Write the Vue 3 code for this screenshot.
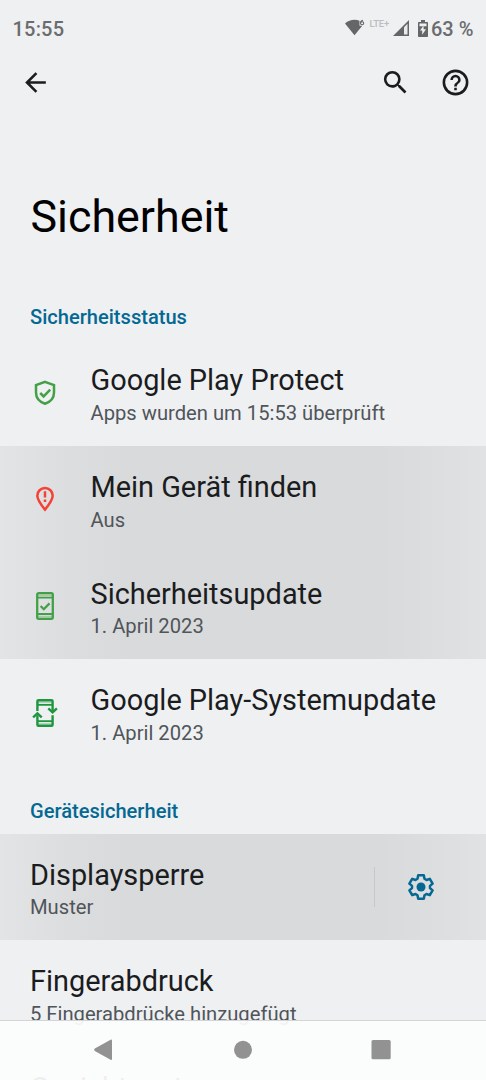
<script setup>
const status = [
  { icon: 'shield', title: 'Google Play Protect', sub: 'Apps wurden um 15:53 überprüft' },
  { icon: 'pin', title: 'Mein Gerät finden', sub: 'Aus', pressed: true },
  { icon: 'phone', title: 'Sicherheitsupdate', sub: '1. April 2023', pressed: true },
  { icon: 'sync', title: 'Google Play-Systemupdate', sub: '1. April 2023' },
]
</script>

<template>
  <div class="screen">
    <header class="statusbar">
      <span class="clock">15:55</span>
      <svg class="wifi" viewBox="0 0 22 18">
        <path d="M0 4.600C2.800 2 6 .8 9.500.8c1.800 0 3.400.3 5 .9v5h2.800L9.500 16.200Z" fill="#656668" />
        <path d="M18 1.200c-1.700.3-2.500 1.400-2.500 2.700 0 1.100.6 1.800 1.600 1.800s1.600-.6 1.600-1.500-.6-1.500-1.500-1.500-1.500.6-1.600 1.300" fill="none" stroke="#656668" stroke-width="1.100" />
      </svg>
      <span class="lte">LTE+</span>
      <svg class="signal" viewBox="0 0 16 16">
        <path d="M0 16 16 0v16Z" fill="#656668" />
        <path d="M11 7.200 14.500 3.700v10.800H11Z" fill="#e9eaec" />
      </svg>
      <svg class="battery" viewBox="0 0 10 17">
        <path d="M3 0h4v2h2.200q.8 0 .8.8v13.400q0 .8-.8.8H.8q-.8 0-.8-.8V2.800Q0 2 .8 2H3Z" fill="#656668" />
        <path d="M1.500 3.500h7v2.700h-7ZM5.600 5.400 2 10.400h2.200v4.400l3.800-5.500H5.600Z" fill="#eff0f2" />
      </svg>
      <span class="percent">63 %</span>
    </header>

    <nav class="toolbar">
      <svg class="tool" viewBox="0 0 24 24"><path d="M20 11H7.830l5.590-5.590L12 4l-8 8 8 8 1.410-1.410L7.830 13H20Z" /></svg>
      <span class="grow"></span>
      <svg class="tool search" viewBox="0 0 24 24"><path d="M15.500 14h-.79l-.28-.27A6.470 6.470 0 0 0 16 9.500 6.500 6.500 0 1 0 9.500 16c1.610 0 3.090-.59 4.230-1.570l.27.28v.79l5 4.990L20.490 19l-4.990-5Zm-6 0a4.500 4.500 0 1 1 0-9 4.500 4.500 0 0 1 0 9Z" /></svg>
      <svg class="tool help" viewBox="0 0 24 24"><path d="M11 18h2v-2h-2v2Zm1-16a10 10 0 1 0 0 20 10 10 0 0 0 0-20Zm0 18a8 8 0 1 1 0-16 8 8 0 0 1 0 16Zm0-14a4 4 0 0 0-4 4h2a2 2 0 1 1 4 0c0 2-3 1.750-3 5h2c0-2.250 3-2.500 3-5a4 4 0 0 0-4-4Z" /></svg>
    </nav>

    <h1>Sicherheit</h1>
    <h2 class="first">Sicherheitsstatus</h2>

    <div v-for="r in status" :key="r.title" class="row" :class="{ pressed: r.pressed }">
      <div class="lead">
        <svg v-if="r.icon === 'shield'" viewBox="0 0 30 30" fill="none" stroke="#43a047" stroke-width="2.500">
          <path d="M15 3.900 24 7.200v7.300c0 5.400-3.600 9.400-9 11.200-5.400-1.800-9-5.800-9-11.200V7.200Z" />
          <path d="m10.200 15 3.400 3.400 6.600-6.700" />
        </svg>
        <svg v-else-if="r.icon === 'pin'" viewBox="0 0 30 30" fill="none" stroke="#f44336" stroke-width="2.500">
          <path d="M15 25.600C10.500 20 7.300 16 7.300 11.700a7.700 7.700 0 0 1 15.400 0C22.700 16 19.500 20 15 25.600Z" />
          <path d="M15 7.200v6.300M15 15.600v2.500" />
        </svg>
        <svg v-else-if="r.icon === 'phone'" viewBox="0 0 30 30" fill="none" stroke="#43a047" stroke-width="2.300">
          <rect x="7.200" y="2.200" width="15.600" height="25.600" rx="1.500" />
          <path d="M7 6.600h16M7 23h16" stroke-width="1.800" />
          <path d="M7 4.300h16M7 25.700h16" stroke-opacity=".35" stroke-width="1.800" />
          <path d="m10.600 15 3.200 3.200 5.700-5.800" />
        </svg>
        <svg v-else viewBox="0 0 30 30" fill="none" stroke="#1e9640" stroke-width="2.400">
          <path d="M7.400 13V3.200q0-1 1-1h13.200q1 0 1 1V13M22.600 17.200v9.600q0 1-1 1H8.400q-1 0-1-1v-9.600" />
          <path d="M7.400 6.800h15.200M7.400 23.200h15.200" stroke-width="1.800" />
          <path d="M7.400 4.300h15.200M7.400 25.700h15.200" stroke-opacity=".3" stroke-width="1.800" />
          <path d="m18.300 10.300 4.300 4 4.300-4M3.100 19.300l4.300-4 4.300 4" />
        </svg>
      </div>
      <div class="text">
        <div class="title">{{ r.title }}</div>
        <div class="sub">{{ r.sub }}</div>
      </div>
    </div>

    <h2 class="second">Gerätesicherheit</h2>

    <div class="row pressed lock">
      <div class="text plain">
        <div class="title">Displaysperre</div>
        <div class="sub">Muster</div>
      </div>
      <div class="gearbox">
        <svg viewBox="0 0 26 26">
          <path d="M10.200 1.300h5.600l.7 3.500 2 1.200 3.300-1.200 2.800 4.800-2.600 2.300v2.200l2.600 2.300-2.800 4.800-3.300-1.200-2 1.200-.7 3.500h-5.600l-.7-3.500-2-1.200-3.300 1.200-2.800-4.800L4 14.100v-2.200L1.400 9.600l2.800-4.800L7.500 6l2-1.200Z" fill="none" stroke="#046893" stroke-width="2.500" stroke-linejoin="round" />
          <circle cx="13" cy="13" r="4.500" fill="#046893" />
        </svg>
      </div>
    </div>

    <div class="row">
      <div class="text plain">
        <div class="title">Fingerabdruck</div>
        <div class="sub">5 Fingerabdrücke hinzugefügt</div>
      </div>
    </div>
    <div class="row">
      <div class="text plain">
        <div class="title">Gesichtsentsperrung</div>
      </div>
    </div>

    <footer class="navbar">
      <svg viewBox="0 1 486 59" fill="#929292">
        <path d="M94.800 28.600 110.600 19.700q1.400-.7 1.400.8v18.400q0 1.500-1.400.8L94.800 30.900q-1.600-1.100 0-2.300Z" />
        <circle cx="243" cy="29.800" r="9" />
        <rect x="371.500" y="20.100" width="19.200" height="19.200" rx="1.500" />
      </svg>
    </footer>
  </div>
</template>

<style>
body { margin: 0; background: #eff0f2; }
</style>

<style scoped>
.screen {
  position: relative;
  width: 486px;
  height: 1080px;
  overflow: hidden;
  background: #eff0f2;
  font-family: Roboto, "Liberation Sans", sans-serif;
  color: #1b1c1e;
}
.screen svg { display: block; flex: none; }
.statusbar {
  display: flex;
  height: 56px;
  box-sizing: border-box;
  padding: 0 12.500px;
  align-items: center;
  font-size: 20px;
  font-weight: 500;
  color: #6b6c6e;
}
.clock { flex: 1; line-height: 24px; padding-top: 2px; letter-spacing: 0.200px; }
.wifi { width: 22px; height: 18px; margin-bottom: 1px; }
.lte { font-size: 9.500px; font-weight: 500; letter-spacing: -0.200px; color: #bbbcbe; margin: 0 3px 9px 2.500px; width: 20px; line-height: 12px; white-space: nowrap; }
.signal { width: 16px; height: 16px; }
.battery { width: 10px; height: 17px; margin: 0 3px 0 9.500px; }
.percent { width: 42.500px; line-height: 24px; padding-top: 2px; white-space: nowrap; }
.toolbar { display: flex; height: 53px; align-items: center; padding: 0 15px 0 20px; }
.grow { flex: 1; }
.tool { width: 31px; height: 31px; fill: #1b1c1e; }
.search { margin-right: 29px; }
h1 { margin: 80px 0 0 30.500px; font-size: 44.800px; line-height: 56px; font-weight: 400; color: #000; }
h2 { margin: 0 0 0 30px; font-size: 20.100px; line-height: 24px; font-weight: 500; color: #046893; }
.first { margin-top: 60px; margin-bottom: 10.300px; }
.second { margin-top: 33.200px; margin-bottom: 10.600px; }
.row { height: 106.670px; display: flex; }
.pressed {
  background: linear-gradient(90deg, #e3e4e6 0, #dcddde 70px, #d9dadc 125px, #d9dadc 380px, #dddedf 440px, #e1e2e4 486px);
}
.lead { width: 90.500px; flex: none; }
.lead svg { width: 30px; height: 30px; margin: 38.500px 0 0 30px; }
.text { flex: 1; padding-top: 24px; white-space: nowrap; }
.plain { padding-left: 30px; }
.title { font-size: 28.900px; line-height: 35px; }
.sub { font-size: 20.200px; line-height: 24px; margin-top: 2.700px; color: #50555a; }
.gearbox { width: 112px; height: 40px; box-sizing: border-box; margin-top: 33px; border-left: 1px solid #c6c8c9; padding: 7px 0 0 32.500px; }
.gearbox svg { width: 26px; height: 26px; }
.navbar {
  position: absolute;
  left: 0;
  bottom: 0;
  width: 100%;
  height: 59px;
  box-sizing: border-box;
  background: rgba(252, 252, 252, 0.94);
  box-shadow: 0 -1px 0 #d3d4d5;
}
.navbar svg { width: 486px; height: 59px; }
</style>
